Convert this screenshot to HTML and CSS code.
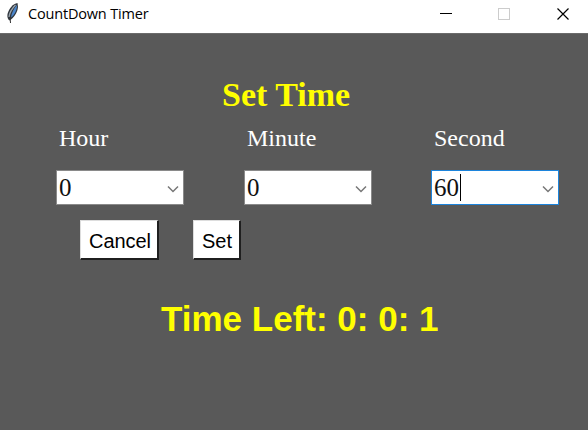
FILE: index.html
```html
<!DOCTYPE html>
<html lang="en">
<head>
<meta charset="utf-8">
<title>CountDown Timer</title>
<link rel="stylesheet" href="styles.css">
</head>
<body>
<header class="titlebar">
  <svg class="feather" width="14" height="22" viewBox="0 0 14 22">
    <path d="M11.500 1 C7 1.500 3 6.500 1.500 12 C1 15 1.800 17.500 3.500 18.500 C7.500 16 11.500 11 12 5 Z" fill="#30363d"/>
    <path d="M11 3 C8 6 5.500 11 5 15.500 C8.500 13 11 8 11 3 Z" fill="#4b86cb"/>
    <path d="M9.500 3 C5.500 7 3.500 11 3 15" fill="none" stroke="#9aa4ad" stroke-width="1.300"/>
    <path d="M4 15 L4.500 21" stroke="#333" stroke-width="1"/>
  </svg>
  <span class="title">CountDown Timer</span>
  <svg class="controls" width="130" height="14" viewBox="0 0 130 14">
    <path d="M0 6.500H12" stroke="#000"/>
    <rect x="58.500" y="1.500" width="11" height="11" fill="none" stroke="#ccc"/>
    <path d="M117.500 1.500L128.500 12.500M128.500 1.500L117.500 12.500" stroke="#000" stroke-width="1.200"/>
  </svg>
</header>
<main class="panel">
  <h1 class="heading">Set Time</h1>
  <div class="fields">
    <div class="field">
      <div class="label">Hour</div>
      <div class="combo"><span class="value">0</span><svg class="arrow" width="12" height="8" viewBox="0 0 12 8"><path d="M1 1.500L6 6.500L11 1.500"/></svg></div>
    </div>
    <div class="field">
      <div class="label">Minute</div>
      <div class="combo"><span class="value">0</span><svg class="arrow" width="12" height="8" viewBox="0 0 12 8"><path d="M1 1.500L6 6.500L11 1.500"/></svg></div>
    </div>
    <div class="field">
      <div class="label">Second</div>
      <div class="combo focused"><span class="value">60</span><span class="caret"></span><svg class="arrow" width="12" height="8" viewBox="0 0 12 8"><path d="M1 1.500L6 6.500L11 1.500"/></svg></div>
    </div>
  </div>
  <div class="buttons">
    <button class="button cancel">Cancel</button>
    <button class="button set">Set</button>
  </div>
  <div class="remaining">Time Left: 0: 0: 1</div>
</main>
</body>
</html>
```

FILE: styles.css
```css
* { box-sizing: border-box; }
body {
  margin: 0;
  height: 430px;
  overflow: hidden;
  background: #595959;
}
.titlebar {
  height: 33px;
  padding: 0 18px 0 6px;
  display: flex;
  align-items: flex-start;
  background: #fff;
}
.feather { margin-top: 2px; }
.title {
  margin: 4px auto 0 8px;
  font: 14.500px/20px "Open Sans", "Noto Sans", sans-serif;
  letter-spacing: -0.180px;
  color: #000;
}
.controls { margin-top: 7px; }
.panel {
  height: 397px;
  border-top: 1px solid #6b6b6b;
}
.heading {
  margin: 41px 0 0 222px;
  font: bold 34px/40px "Liberation Serif", serif;
  color: #ff0;
}
.fields {
  display: grid;
  grid-template-columns: 188px 187px 128px;
  margin: 9px 0 0 56px;
}
.field { width: 128px; }
.label {
  height: 46px;
  padding-left: 3px;
  font: 24px/28px "Liberation Serif", serif;
  color: #fff;
}
.combo {
  height: 35px;
  padding: 0 4px 0 3px;
  display: flex;
  align-items: center;
  background: #fff;
  border: 1px solid #8a8a8a;
  font: 25px/33px "Liberation Serif", serif;
  color: #111;
}
.value { margin-left: -1px; }
.focused { border-color: #1c84dc; }
.caret { width: 1px; height: 27px; margin-left: 1px; background: #000; }
.arrow { margin: 3px 0 0 auto; }
.arrow path { fill: none; stroke: #777; stroke-width: 1.500; }
.buttons {
  display: flex;
  gap: 34px;
  margin: 15px 0 0 80px;
}
.button {
  height: 40px;
  padding: 3px 0 0 1px;
  background: #fff;
  border: solid #1f1f1f;
  border-width: 1px 2px 2px 1px;
  border-top-color: #ddd;
  border-left-color: #ddd;
  font: 20px/34px "Liberation Sans", sans-serif;
  letter-spacing: -0.050px;
  color: #000;
}
.cancel { width: 79px; padding-left: 2px; }
.set { width: 48px; }
.remaining {
  margin: 39px 0 0 161px;
  font: bold 35px/40px "Liberation Sans", sans-serif;
  color: #ff0;
  white-space: nowrap;
}
```
